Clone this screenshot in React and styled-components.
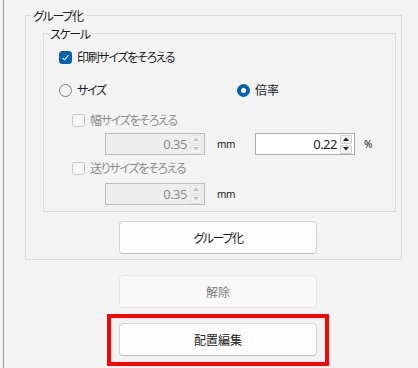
import React from "react";
import styled, { createGlobalStyle } from "styled-components";

const GlobalStyle = createGlobalStyle`
  html, body {
    margin: 0;
    padding: 0;
    background: #f3f3f3;
  }
  body {
    font-family: "Noto Sans CJK JP", "Noto Sans", sans-serif;
    font-size: 12px;
    color: #1b1b1b;
    font-feature-settings: "palt";
  }
`;

const Page = styled.div`
  width: 418px;
  height: 368px;
  padding-left: 3px;
  box-sizing: border-box;
`;

const Panel = styled.div`
  height: 368px;
  border-left: 1px solid #9a9a9a;
  box-sizing: border-box;
  overflow: hidden;
`;

const Group = styled.fieldset`
  box-sizing: border-box;
  width: ${(p) => p.$width}px;
  margin: ${(p) => p.$margin};
  padding: 0 0 ${(p) => p.$padBottom}px 0;
  border: 1px solid #dcdcdc;
  min-inline-size: 0;
`;

const Legend = styled.legend`
  margin-left: ${(p) => p.$indent}px;
  padding: 0 2px;
  line-height: 15px;
  font-size: 12px;
  letter-spacing: -1.3px;
  color: #1b1b1b;
`;

const Row = styled.div`
  display: flex;
  align-items: center;
  height: ${(p) => p.$h || 20}px;
  margin-top: ${(p) => p.$mt || 0}px;
  padding-left: ${(p) => p.$pl || 0}px;
`;

const Label = styled.span`
  margin-left: 5px;
  line-height: 20px;
  letter-spacing: ${(p) => (p.$kanji ? "0" : "-1.3px")};
  color: ${(p) => (p.$disabled ? "#8d8d8d" : "#1b1b1b")};
`;

const Box = styled.span`
  width: 13px;
  height: 13px;
  box-sizing: border-box;
  border-radius: 3px;
  display: inline-flex;
  align-items: center;
  justify-content: center;
  background: ${(p) => (p.$checked ? "#0062b8" : "#f8f8f8")};
  border: 1px solid ${(p) => (p.$checked ? "#0062b8" : "#c4c4c4")};
`;

const Circle = styled.span`
  width: 13px;
  height: 13px;
  box-sizing: border-box;
  border-radius: 50%;
  display: inline-flex;
  align-items: center;
  justify-content: center;
  background: ${(p) => (p.$checked ? "#0062b8" : "transparent")};
  border: 1px solid ${(p) => (p.$checked ? "#0062b8" : "#7d7d7d")};
  &::after {
    content: "";
    display: ${(p) => (p.$checked ? "block" : "none")};
    width: 5px;
    height: 5px;
    border-radius: 50%;
    background: #fff;
  }
`;

const RadioItem = styled.div`
  display: flex;
  align-items: center;
  width: ${(p) => p.$w || "auto"};
`;

const SpinBox = styled.div`
  display: flex;
  align-items: center;
  width: 100px;
  height: 22px;
  box-sizing: border-box;
  border: 1px solid ${(p) => (p.$disabled ? "#bcbcbc" : "#a9a9a9")};
  background: ${(p) => (p.$disabled ? "#eeeeee" : "#ffffff")};
`;

const SpinValue = styled.span`
  flex: 1;
  text-align: right;
  padding-right: 3px;
  font-family: "Noto Sans", sans-serif;
  font-size: 13px;
  letter-spacing: -0.5px;
  line-height: 20px;
  color: ${(p) => (p.$disabled ? "#8d8d8d" : "#1b1b1b")};
`;

const SpinButtons = styled.div`
  display: flex;
  flex-direction: column;
  gap: 1px;
  width: 12px;
  margin-right: 2px;
`;

const SpinButton = styled.span`
  height: 9px;
  display: flex;
  align-items: center;
  justify-content: center;
  border-radius: 1px;
  background: ${(p) => (p.$disabled ? "#f2f2f2" : "#f0f0f0")};
  border: 1px solid ${(p) => (p.$disabled ? "#e2e2e2" : "#d0d0d0")};
  box-sizing: border-box;
`;

const Unit = styled.span`
  width: ${(p) => p.$w}px;
  margin-left: ${(p) => p.$ml}px;
  font-family: "Noto Sans", sans-serif;
  font-size: 10px;
  letter-spacing: -0.3px;
  color: #1b1b1b;
`;

const Button = styled.button`
  display: flex;
  align-items: center;
  justify-content: center;
  width: 198px;
  height: 33px;
  margin: ${(p) => p.$margin || 0};
  padding: 0;
  box-sizing: border-box;
  border-radius: 4px;
  font-family: inherit;
  font-size: 12px;
  font-feature-settings: "palt";
  letter-spacing: ${(p) => (p.$kana ? "-1.4px" : "0")};
  background: ${(p) => (p.disabled ? "#f8f8f8" : "#fdfdfd")};
  color: ${(p) => (p.disabled ? "#7c7c7c" : "#1b1b1b")};
  border: 1px solid ${(p) => (p.disabled ? "#e6e6e6" : "#d3d3d3")};
  border-bottom-color: ${(p) => (p.disabled ? "#e6e6e6" : "#bdbdbd")};
`;

const Highlight = styled.div`
  width: 222px;
  height: 52px;
  margin: 6px 0 0 103px;
  padding: 5px 8px 0 8px;
  box-sizing: border-box;
  border: 4px solid #ff0000;
  box-shadow: 0 0 0 1px #ffffff;
`;

const Check = () => (
  <svg width="9" height="9" viewBox="0 0 9 9">
    <path d="M1.5 4.8 L3.6 6.8 L7.6 2.2" fill="none" stroke="#fff" strokeWidth="1.1" />
  </svg>
);

const Arrow = ({ up, color }) => (
  <svg width="6" height="4" viewBox="0 0 6 4">
    <path d={up ? "M0 4 L3 0.5 L6 4 Z" : "M0 0 L3 3.5 L6 0 Z"} fill={color} />
  </svg>
);

const CheckBox = ({ checked, disabled, label }) => (
  <>
    <Box $checked={checked}>{checked && <Check />}</Box>
    <Label $disabled={disabled}>{label}</Label>
  </>
);

const Spin = ({ value, disabled }) => {
  const color = disabled ? "#c4c4c4" : "#222";
  return (
    <SpinBox $disabled={disabled}>
      <SpinValue $disabled={disabled}>{value}</SpinValue>
      <SpinButtons>
        <SpinButton $disabled={disabled}>
          <Arrow up color={color} />
        </SpinButton>
        <SpinButton $disabled={disabled}>
          <Arrow color={color} />
        </SpinButton>
      </SpinButtons>
    </SpinBox>
  );
};

export default function App() {
  return (
    <Page>
      <GlobalStyle />
      <Panel>
        <Group $width={377} $margin="8px 0 0 21px" $padBottom={5}>
          <Legend $indent={5}>グループ化</Legend>
          <Group $width={353} $margin="3px 0 0 17px" $padBottom={6}>
            <Legend $indent={4}>スケール</Legend>
            <Row $mt={6} $pl={15}>
              <CheckBox checked label="印刷サイズをそろえる" />
            </Row>
            <Row $mt={13} $pl={15}>
              <RadioItem $w="178px">
                <Circle />
                <Label>サイズ</Label>
              </RadioItem>
              <RadioItem>
                <Circle $checked />
                <Label $kanji>倍率</Label>
              </RadioItem>
            </Row>
            <Row $mt={10} $pl={28}>
              <CheckBox disabled label="幅サイズをそろえる" />
            </Row>
            <Row $mt={3} $pl={61} $h={22}>
              <Spin value="0.35" disabled />
              <Unit $ml={12} $w={38}>mm</Unit>
              <Spin value="0.22" />
              <Unit $ml={9} $w={20}>%</Unit>
            </Row>
            <Row $mt={3} $pl={28}>
              <CheckBox disabled label="送りサイズをそろえる" />
            </Row>
            <Row $mt={5} $pl={61} $h={22}>
              <Spin value="0.35" disabled />
              <Unit $ml={12} $w={38}>mm</Unit>
            </Row>
          </Group>
          <Button $kana $margin="9px 0 0 93px">グループ化</Button>
        </Group>
        <Button disabled $margin="15px 0 0 115px">解除</Button>
        <Highlight>
          <Button>配置編集</Button>
        </Highlight>
      </Panel>
    </Page>
  );
}
